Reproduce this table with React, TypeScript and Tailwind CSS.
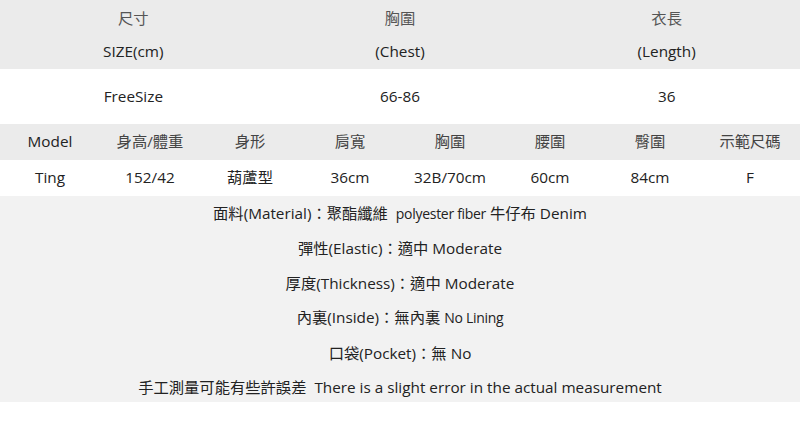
import React from 'react';

const font = { fontFamily: '"Open Sans", "Noto Sans CJK TC", sans-serif' };

const modelHead = ['Model', '身高/體重', '身形', '肩寬', '胸圍', '腰圍', '臀圍', '示範尺碼'];
const modelRow = ['Ting', '152/42', '葫蘆型', '36cm', '32B/70cm', '60cm', '84cm', 'F'];

export default function App() {
  return (
    <div className="w-[800px] h-[438px] bg-white text-[15.3px] text-[#222]" style={font}>
      {/* Size table */}
      <div className="bg-[#ebebeb] h-[69px] pt-[2px]">
        <div className="grid grid-cols-3 text-center h-[32px] items-center text-[#555]">
          <span>尺寸</span>
          <span>胸圍</span>
          <span>衣長</span>
        </div>
        <div className="grid grid-cols-3 text-center h-[34px] items-center">
          <span>SIZE(cm)</span>
          <span>(Chest)</span>
          <span>(Length)</span>
        </div>
      </div>
      <div className="grid grid-cols-3 text-center h-[55px] items-center">
        <span>FreeSize</span>
        <span>66-86</span>
        <span>36</span>
      </div>

      {/* Model table */}
      <div className="bg-[#ebebeb] grid grid-cols-8 text-center h-[36px] items-center text-[#444] pb-px">
        {modelHead.map((h) => (
          <span key={h} className={h === 'Model' ? 'text-[#222]' : ''}>{h}</span>
        ))}
      </div>
      <div className="grid grid-cols-8 text-center h-[36px] items-center pb-px">
        {modelRow.map((c) => (
          <span key={c}>{c}</span>
        ))}
      </div>

      {/* Notes */}
      <div className="bg-[#f2f2f2] h-[206px] flex flex-col items-center leading-[34.4px]">
        <p>
          面料(Material)：聚酯纖維&nbsp; <span className="text-[14px] tracking-[-0.3px]">polyester fiber</span> 牛仔布 Denim
        </p>
        <p>彈性(Elastic)：適中 Moderate</p>
        <p>厚度(Thickness)：適中 Moderate</p>
        <p>
          內裏(Inside)：無內裏 <span className="text-[14px] tracking-[-0.3px]">No Lining</span>
        </p>
        <p>口袋(Pocket)：無 No</p>
        <p>手工測量可能有些許誤差&nbsp; There is a slight error in the actual measurement</p>
      </div>
    </div>
  );
}
